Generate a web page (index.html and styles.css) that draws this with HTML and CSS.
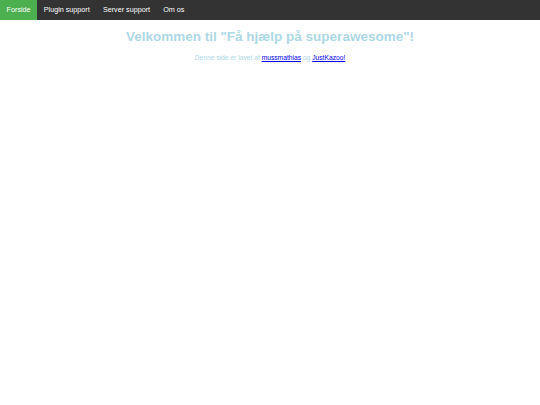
FILE: index.html
```html
<!DOCTYPE html>
<html>
<head>
<meta charset="utf-8">
<link rel="stylesheet" href="styles.css">
</head>
<body>
<ul class="nav">
  <li><a class="active" href="#">Forside</a></li>
  <li><a href="#">Plugin support</a></li>
  <li><a href="#">Server support</a></li>
  <li><a href="#">Om os</a></li>
</ul>
<h1 class="title">Velkommen til "Få hjælp på superawesome"!</h1>
<p class="sub">Denne side er lavet af <a href="#">mussmathias</a> og <a href="#">JustKazoo!</a></p>
</body>
</html>
```
FILE: styles.css
```css
html, body { margin: 0; padding: 0; background: #fff; font-family: "Liberation Sans", Arial, sans-serif; }
.nav { list-style: none; margin: 0; padding: 0; display: flex; background: #333; height: 20px; }
.nav li a { display: block; color: #fff; text-decoration: none; font-size: 7.2px; line-height: 20px; padding: 0 6.6px; }
.nav li a.active { background: #4caf50; }
.title { margin: 9px 0 0; text-align: center; color: #add8e6; font-size: 13.5px; line-height: 16px; font-weight: bold; }
.sub { margin: 9px 0 0; text-align: center; color: #add8e6; font-size: 6.7px; line-height: 8px; }
.sub a { color: #0000ee; text-decoration: underline; }
```
